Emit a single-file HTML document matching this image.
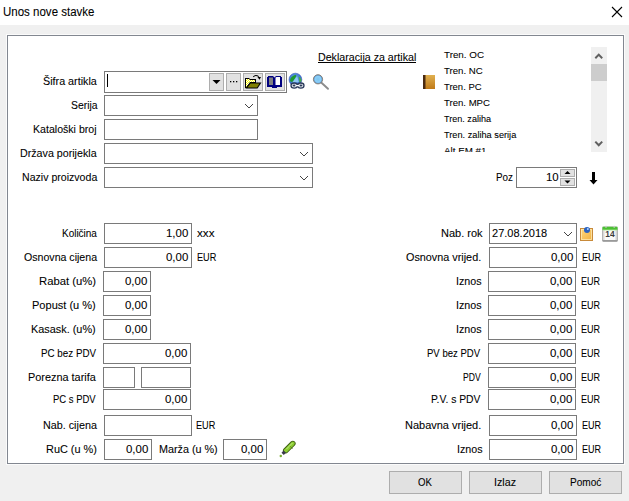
<!DOCTYPE html>
<html><head><meta charset="utf-8"><style>
html,body{margin:0;padding:0;width:629px;height:501px;overflow:hidden;background:#f0f0f0;position:relative;font-family:"Liberation Sans",sans-serif;}
.t{position:absolute;white-space:nowrap;line-height:1;transform-origin:0 0;-webkit-text-stroke:0.08px currentColor;}
.b{position:absolute;box-sizing:border-box;border:1px solid #7a7a7a;background:#fff;}
.btn{position:absolute;box-sizing:border-box;border:1px solid #adadad;background:#e1e1e1;}
svg{position:absolute;overflow:visible;}
</style></head><body>
<div style="position:absolute;left:0;top:0;width:629px;height:25px;background:#fff"></div>
<div style="position:absolute;left:6px;top:34px;width:619px;height:431px;background:#fbfbfb"></div>
<div style="position:absolute;left:7px;top:35px;width:617px;height:429px;box-sizing:border-box;border:1px solid #828790;background:#fff"></div>
<div class="t" style="left:2.50px;top:6.00px;font-size:12.5px;transform:scaleX(0.9209);color:#000;">Unos nove stavke</div>
<svg style="left:0;top:0" width="629" height="30"><path d="M612 7 L622 17 M622 7 L612 17" stroke="#000" stroke-width="1.1" fill="none"/></svg>
<div class="b" style="left:104px;top:71px;width:183px;height:22px;"></div>
<div class="btn" style="left:209px;top:73px;width:15px;height:18px;"></div>
<div class="btn" style="left:226px;top:73px;width:15px;height:18px;"></div>
<div class="btn" style="left:243px;top:73px;width:20px;height:18px;"></div>
<div class="btn" style="left:265px;top:73px;width:20px;height:18px;"></div>
<div class="b" style="left:104px;top:95px;width:154px;height:21px;"></div>
<div class="b" style="left:104px;top:119px;width:154px;height:21px;"></div>
<div class="b" style="left:104px;top:143px;width:209px;height:21px;"></div>
<div class="b" style="left:104px;top:167px;width:209px;height:21px;"></div>
<div class="b" style="left:516px;top:167px;width:61px;height:21px;"></div>
<div class="t" style="left:43.20px;top:75.74px;font-size:11px;transform:scaleX(0.9776);color:#000;">Šifra artikla</div>
<div class="t" style="left:70.50px;top:99.74px;font-size:11px;transform:scaleX(0.9422);color:#000;">Serija</div>
<div class="t" style="left:33.40px;top:123.74px;font-size:11px;transform:scaleX(0.9627);color:#000;">Kataloški broj</div>
<div class="t" style="left:20.40px;top:147.74px;font-size:11px;transform:scaleX(0.9712);color:#000;">Država porijekla</div>
<div class="t" style="left:21.70px;top:171.74px;font-size:11px;transform:scaleX(0.9619);color:#000;">Naziv proizvoda</div>
<div class="b" style="left:104px;top:223px;width:88px;height:21px;"></div>
<div class="b" style="left:104px;top:247px;width:88px;height:21px;"></div>
<div class="b" style="left:103px;top:271px;width:48px;height:21px;"></div>
<div class="b" style="left:103px;top:295px;width:48px;height:21px;"></div>
<div class="b" style="left:103px;top:319px;width:48px;height:21px;"></div>
<div class="b" style="left:103px;top:343px;width:88px;height:21px;"></div>
<div class="b" style="left:103px;top:367px;width:32px;height:21px;"></div>
<div class="b" style="left:141px;top:367px;width:50px;height:21px;"></div>
<div class="b" style="left:103px;top:389px;width:88px;height:21px;"></div>
<div class="b" style="left:104px;top:415px;width:88px;height:21px;"></div>
<div class="b" style="left:104px;top:439px;width:48px;height:21px;"></div>
<div class="b" style="left:223px;top:439px;width:44px;height:21px;"></div>
<div class="t" style="left:62.20px;top:227.74px;font-size:11px;transform:scaleX(0.9058);color:#000;">Količina</div>
<div class="t" style="left:23.90px;top:251.74px;font-size:11px;transform:scaleX(0.9634);color:#000;">Osnovna cijena</div>
<div class="t" style="left:39.00px;top:275.74px;font-size:11px;transform:scaleX(1.0241);color:#000;">Rabat (u%)</div>
<div class="t" style="left:32.20px;top:299.74px;font-size:11px;transform:scaleX(1.0028);color:#000;">Popust (u %)</div>
<div class="t" style="left:31.30px;top:323.74px;font-size:11px;transform:scaleX(0.9887);color:#000;">Kasask. (u%)</div>
<div class="t" style="left:40.80px;top:347.74px;font-size:11px;transform:scaleX(0.8919);color:#000;">PC bez PDV</div>
<div class="t" style="left:28.20px;top:371.74px;font-size:11px;transform:scaleX(0.9893);color:#000;">Porezna tarifa</div>
<div class="t" style="left:53.30px;top:393.74px;font-size:11px;transform:scaleX(0.8621);color:#000;">PC s PDV</div>
<div class="t" style="left:43.20px;top:419.74px;font-size:11px;transform:scaleX(0.9789);color:#000;">Nab. cijena</div>
<div class="t" style="left:46.10px;top:443.74px;font-size:11px;transform:scaleX(0.9914);color:#000;">RuC (u %)</div>
<div class="t" style="left:158.70px;top:443.74px;font-size:11px;transform:scaleX(0.9799);color:#000;">Marža (u %)</div>
<div class="b" style="left:489px;top:223px;width:88px;height:21px;"></div>
<div class="b" style="left:489px;top:247px;width:88px;height:21px;"></div>
<div class="b" style="left:488px;top:271px;width:88px;height:21px;"></div>
<div class="b" style="left:488px;top:295px;width:88px;height:21px;"></div>
<div class="b" style="left:488px;top:319px;width:88px;height:21px;"></div>
<div class="b" style="left:488px;top:343px;width:88px;height:21px;"></div>
<div class="b" style="left:488px;top:367px;width:88px;height:21px;"></div>
<div class="b" style="left:488px;top:389px;width:88px;height:21px;"></div>
<div class="b" style="left:489px;top:415px;width:88px;height:21px;"></div>
<div class="b" style="left:489px;top:439px;width:88px;height:21px;"></div>
<div class="t" style="left:441.20px;top:227.74px;font-size:11px;transform:scaleX(1.0002);color:#000;">Nab. rok</div>
<div class="t" style="left:405.80px;top:251.74px;font-size:11px;transform:scaleX(0.9834);color:#000;">Osnovna vrijed.</div>
<div class="t" style="left:455.50px;top:275.74px;font-size:11px;transform:scaleX(0.9729);color:#000;">Iznos</div>
<div class="t" style="left:455.50px;top:299.74px;font-size:11px;transform:scaleX(0.9729);color:#000;">Iznos</div>
<div class="t" style="left:455.50px;top:323.74px;font-size:11px;transform:scaleX(0.9729);color:#000;">Iznos</div>
<div class="t" style="left:427.30px;top:347.74px;font-size:11px;transform:scaleX(0.8678);color:#000;">PV bez PDV</div>
<div class="t" style="left:462.70px;top:371.74px;font-size:11px;transform:scaleX(0.7823);color:#000;">PDV</div>
<div class="t" style="left:430.90px;top:393.74px;font-size:11px;transform:scaleX(0.9406);color:#000;">P.V. s PDV</div>
<div class="t" style="left:405.30px;top:419.74px;font-size:11px;transform:scaleX(0.9978);color:#000;">Nabavna vrijed.</div>
<div class="t" style="left:456.70px;top:443.74px;font-size:11px;transform:scaleX(0.9729);color:#000;">Iznos</div>
<div class="t" style="left:495.50px;top:171.74px;font-size:11px;transform:scaleX(0.8962);color:#000;">Poz</div>
<div class="btn" style="left:389px;top:471px;width:73px;height:23px;"></div>
<div class="btn" style="left:469px;top:471px;width:73px;height:23px;"></div>
<div class="btn" style="left:549px;top:471px;width:73px;height:23px;"></div>
<div class="t" style="left:166.28px;top:227.74px;font-size:11px;transform:scaleX(1.0400)">1,00</div>
<div class="t" style="left:166.28px;top:251.74px;font-size:11px;transform:scaleX(1.0400)">0,00</div>
<div class="t" style="left:125.28px;top:275.74px;font-size:11px;transform:scaleX(1.0400)">0,00</div>
<div class="t" style="left:125.28px;top:299.74px;font-size:11px;transform:scaleX(1.0400)">0,00</div>
<div class="t" style="left:125.28px;top:323.74px;font-size:11px;transform:scaleX(1.0400)">0,00</div>
<div class="t" style="left:165.28px;top:347.74px;font-size:11px;transform:scaleX(1.0400)">0,00</div>
<div class="t" style="left:165.28px;top:393.74px;font-size:11px;transform:scaleX(1.0400)">0,00</div>
<div class="t" style="left:126.28px;top:443.74px;font-size:11px;transform:scaleX(1.0400)">0,00</div>
<div class="t" style="left:241.28px;top:443.74px;font-size:11px;transform:scaleX(1.0400)">0,00</div>
<div class="t" style="left:551.28px;top:251.74px;font-size:11px;transform:scaleX(1.0400)">0,00</div>
<div class="t" style="left:551.28px;top:419.74px;font-size:11px;transform:scaleX(1.0400)">0,00</div>
<div class="t" style="left:551.28px;top:443.74px;font-size:11px;transform:scaleX(1.0400)">0,00</div>
<div class="t" style="left:550.28px;top:275.74px;font-size:11px;transform:scaleX(1.0400)">0,00</div>
<div class="t" style="left:550.28px;top:299.74px;font-size:11px;transform:scaleX(1.0400)">0,00</div>
<div class="t" style="left:550.28px;top:323.74px;font-size:11px;transform:scaleX(1.0400)">0,00</div>
<div class="t" style="left:550.28px;top:347.74px;font-size:11px;transform:scaleX(1.0400)">0,00</div>
<div class="t" style="left:550.28px;top:371.74px;font-size:11px;transform:scaleX(1.0400)">0,00</div>
<div class="t" style="left:550.28px;top:393.74px;font-size:11px;transform:scaleX(1.0400)">0,00</div>
<div class="t" style="left:545.83px;top:171.74px;font-size:11px;transform:scaleX(1.0400)">10</div>
<div class="t" style="left:196.70px;top:227.74px;font-size:11px;transform:scaleX(1.0606);color:#000;">xxx</div>
<div class="t" style="left:196.70px;top:251.74px;font-size:11px;transform:scaleX(0.8312);color:#000;">EUR</div>
<div class="t" style="left:196.30px;top:419.74px;font-size:11px;transform:scaleX(0.8312);color:#000;">EUR</div>
<div class="t" style="left:582.00px;top:251.74px;font-size:11px;transform:scaleX(0.8183);color:#000;">EUR</div>
<div class="t" style="left:582.00px;top:419.74px;font-size:11px;transform:scaleX(0.8183);color:#000;">EUR</div>
<div class="t" style="left:582.00px;top:443.74px;font-size:11px;transform:scaleX(0.8183);color:#000;">EUR</div>
<div class="t" style="left:581.00px;top:275.74px;font-size:11px;transform:scaleX(0.8183);color:#000;">EUR</div>
<div class="t" style="left:581.00px;top:299.74px;font-size:11px;transform:scaleX(0.8183);color:#000;">EUR</div>
<div class="t" style="left:581.00px;top:323.74px;font-size:11px;transform:scaleX(0.8183);color:#000;">EUR</div>
<div class="t" style="left:581.00px;top:347.74px;font-size:11px;transform:scaleX(0.8183);color:#000;">EUR</div>
<div class="t" style="left:581.00px;top:371.74px;font-size:11px;transform:scaleX(0.8183);color:#000;">EUR</div>
<div class="t" style="left:581.00px;top:393.74px;font-size:11px;transform:scaleX(0.8183);color:#000;">EUR</div>
<div class="t" style="left:491.80px;top:227.74px;font-size:11px;transform:scaleX(1.0014);color:#000;">27.08.2018</div>
<svg style="left:0;top:0" width="1" height="1" fill="#444"><rect x="245" y="104" width="1" height="1"/><rect x="252" y="104" width="1" height="1"/><rect x="246" y="105" width="1" height="1"/><rect x="251" y="105" width="1" height="1"/><rect x="247" y="106" width="1" height="1"/><rect x="250" y="106" width="1" height="1"/><rect x="248" y="107" width="1" height="1"/><rect x="249" y="107" width="1" height="1"/></svg>
<svg style="left:0;top:0" width="1" height="1" fill="#444"><rect x="300" y="152" width="1" height="1"/><rect x="307" y="152" width="1" height="1"/><rect x="301" y="153" width="1" height="1"/><rect x="306" y="153" width="1" height="1"/><rect x="302" y="154" width="1" height="1"/><rect x="305" y="154" width="1" height="1"/><rect x="303" y="155" width="1" height="1"/><rect x="304" y="155" width="1" height="1"/></svg>
<svg style="left:0;top:0" width="1" height="1" fill="#444"><rect x="300" y="176" width="1" height="1"/><rect x="307" y="176" width="1" height="1"/><rect x="301" y="177" width="1" height="1"/><rect x="306" y="177" width="1" height="1"/><rect x="302" y="178" width="1" height="1"/><rect x="305" y="178" width="1" height="1"/><rect x="303" y="179" width="1" height="1"/><rect x="304" y="179" width="1" height="1"/></svg>
<svg style="left:0;top:0" width="1" height="1" fill="#444"><rect x="564" y="232" width="1" height="1"/><rect x="571" y="232" width="1" height="1"/><rect x="565" y="233" width="1" height="1"/><rect x="570" y="233" width="1" height="1"/><rect x="566" y="234" width="1" height="1"/><rect x="569" y="234" width="1" height="1"/><rect x="567" y="235" width="1" height="1"/><rect x="568" y="235" width="1" height="1"/></svg>
<div class="t" style="left:417.60px;top:476.74px;font-size:11px;transform:scaleX(0.8739);color:#000;">OK</div>
<div class="t" style="left:493.50px;top:476.74px;font-size:11px;transform:scaleX(0.9724);color:#000;">Izlaz</div>
<div class="t" style="left:569.50px;top:476.74px;font-size:11px;transform:scaleX(0.9168);color:#000;">Pomoć</div>
<div class="t" style="left:317.50px;top:52.14px;font-size:11px;transform:scaleX(0.9685);color:#000;">Deklaracija za artikal</div>
<div style="position:absolute;left:318px;top:62px;width:98px;height:1px;background:#000"></div>
<div style="position:absolute;left:440px;top:44px;width:150px;height:108px;overflow:hidden">
<div class="t" style="left:4.3px;top:6.05px;font-size:9.7px;transform:scaleX(1.0135);-webkit-text-stroke:0.08px #000">Tren. OC</div>
<div class="t" style="left:4.3px;top:22.05px;font-size:9.7px;transform:scaleX(0.9939);-webkit-text-stroke:0.08px #000">Tren. NC</div>
<div class="t" style="left:4.3px;top:38.05px;font-size:9.7px;transform:scaleX(0.9790);-webkit-text-stroke:0.08px #000">Tren. PC</div>
<div class="t" style="left:4.3px;top:54.05px;font-size:9.7px;transform:scaleX(0.9878);-webkit-text-stroke:0.08px #000">Tren. MPC</div>
<div class="t" style="left:4.3px;top:70.05px;font-size:9.7px;transform:scaleX(0.9370);-webkit-text-stroke:0.08px #000">Tren. zaliha</div>
<div class="t" style="left:4.3px;top:86.05px;font-size:9.7px;transform:scaleX(0.9499);-webkit-text-stroke:0.08px #000">Tren. zaliha serija</div>
<div class="t" style="left:4.3px;top:102.05px;font-size:9.7px;transform:scaleX(1.0119);-webkit-text-stroke:0.08px #000">Alt EM #1</div>
</div>
<div style="position:absolute;left:591px;top:47px;width:16px;height:105px;background:#f0f0f0"></div>
<div style="position:absolute;left:591px;top:64px;width:16px;height:17px;background:#cdcdcd"></div>
<svg style="left:0;top:0" width="1" height="1"><path d="M595.3 58.3 L598.75 54.6 L602.2 58.3" stroke="#606060" stroke-width="2" fill="none"/><path d="M595.3 141.6 L598.75 145.3 L602.2 141.6" stroke="#606060" stroke-width="2" fill="none"/></svg>
<svg style="left:0;top:0" width="1" height="1"><path d="M212.5 80 L220.5 80 L216.5 84 Z" fill="#000"/><rect x="230" y="81" width="1.3" height="1.3" fill="#000"/><rect x="233" y="81" width="1.3" height="1.3" fill="#000"/><rect x="236" y="81" width="1.3" height="1.3" fill="#000"/></svg>
<div style="position:absolute;left:107px;top:74px;width:1px;height:13px;background:#000"></div>
<div class="btn" style="left:560px;top:169px;width:15px;height:8px;"></div>
<div class="btn" style="left:560px;top:178px;width:15px;height:8px;"></div>
<svg style="left:0;top:0" width="1" height="1"><path d="M564.5 174 L570.5 174 L567.5 171 Z" fill="#000"/><path d="M564.5 180.5 L570.5 180.5 L567.5 183.5 Z" fill="#000"/><path d="M592 172 L595 172 L595 180 L597.5 180 L593.5 184.5 L589.5 180 L592 180 Z" fill="#000"/></svg>
<svg style="left:0;top:0" width="1" height="1">
<defs><pattern id="dith" x="0" y="0" width="2" height="2" patternUnits="userSpaceOnUse"><rect width="2" height="2" fill="#ffff00"/><rect x="1" y="0" width="1" height="1" fill="#fff"/><rect x="0" y="1" width="1" height="1" fill="#fff"/></pattern></defs>
<path d="M245 78 H249 L250 79 H256 V83 H250 L246 88 H245 Z" fill="#000"/>
<path d="M246 79 H249 L250 80 H255 V82 H250 L246.5 87 H246 Z" fill="url(#dith)"/>
<path d="M246 87.5 L250 82.5 H261.5 L257.5 88.5 H245.5 Z" fill="#000"/>
<path d="M247.5 87.5 L250.5 83.5 H259.5 L257 87.5 Z" fill="#808000"/>
<path d="M253.3 76.8 Q255.5 74.3 258.8 76.6" stroke="#000" stroke-width="1.1" fill="none"/>
<path d="M257.5 77 H261 L259.5 79.8 Z" fill="#000"/>
</svg>
<svg style="left:0;top:0" width="1" height="1">
<path d="M267 77 H268 V76 H273 L274.5 77.5 L276 76 H281 V77 H282 V87 H277 V88 H272 V87 H267 Z" fill="#000080"/>
<rect x="269" y="77.5" width="4" height="7.5" fill="#808080"/>
<path d="M275.5 77.5 L276.5 77 H280 V85 H275.5 Z" fill="#fff"/>
</svg>
<svg style="left:0;top:0" width="1" height="1">
<defs><radialGradient id="gl" cx="0.45" cy="0.4" r="0.65"><stop offset="0" stop-color="#70b0f0"/><stop offset="0.75" stop-color="#3a70d0"/><stop offset="1" stop-color="#2a50b0"/></radialGradient></defs>
<circle cx="295.4" cy="79.6" r="6.4" fill="url(#gl)" stroke="#3a5cb8" stroke-width="0.6"/>
<path d="M290 80.5 Q290.5 76.5 295.5 74.8 L296.5 76 L293 81.5 L291 82 Z" fill="#1f9a30"/>
<path d="M298.5 76.2 Q301.2 77.5 301.6 81 L299.5 82.5 Z" fill="#44b040"/>
<path d="M297 76.3 L292.5 82.3 L299 82.3 Z" fill="#8cc8f4"/>
<ellipse cx="294.2" cy="85.6" rx="3.2" ry="2.6" fill="#e6ebf0" stroke="#2c3c5c" stroke-width="1.3"/>
<ellipse cx="300.8" cy="85.6" rx="3.2" ry="2.6" fill="#e6ebf0" stroke="#2c3c5c" stroke-width="1.3"/>
<ellipse cx="294.2" cy="85.6" rx="1.6" ry="1" fill="#2c3c5c"/>
<ellipse cx="300.8" cy="85.6" rx="1.6" ry="1" fill="#2c3c5c"/>
<rect x="295.5" y="85" width="4" height="1.2" fill="#fff"/>
</svg>
<svg style="left:0;top:0" width="1" height="1">
<defs><radialGradient id="mg" cx="0.5" cy="0.5" r="0.55"><stop offset="0" stop-color="#7cc4f0"/><stop offset="0.6" stop-color="#8cd0f8"/><stop offset="1" stop-color="#2a66c0"/></radialGradient></defs>
<path d="M321.2 82.5 L328 88.8" stroke="#8c8c8c" stroke-width="1.9" stroke-linecap="round"/>
<circle cx="318" cy="79.3" r="4.6" fill="url(#mg)" stroke="#8a8478" stroke-width="1"/>
</svg>
<svg style="left:0;top:0" width="1" height="1">
<defs><linearGradient id="bk" x1="0" y1="0" x2="0" y2="1"><stop offset="0" stop-color="#e0b050"/><stop offset="1" stop-color="#c07a18"/></linearGradient></defs>
<rect x="423" y="75" width="12" height="14" fill="url(#bk)"/>
<rect x="423" y="75" width="2.5" height="14" fill="#4a2a10"/>
</svg>
<svg style="left:0;top:0" width="1" height="1">
<defs><linearGradient id="nt" x1="0" y1="0" x2="1" y2="1"><stop offset="0" stop-color="#ffd880"/><stop offset="1" stop-color="#f0b040"/></linearGradient></defs>
<rect x="580.5" y="228.5" width="12" height="12" fill="url(#nt)" stroke="#c88a3a" stroke-width="1"/>
<rect x="581.5" y="229.5" width="10" height="10" fill="none" stroke="#fff4c8" stroke-width="0.8" opacity="0.8"/><circle cx="587" cy="229.9" r="3" fill="#2a62c0"/><circle cx="587.8" cy="229" r="1" fill="#b0d4ff"/>
</svg>
<svg style="left:0;top:0" width="1" height="1">
<defs><linearGradient id="cb" x1="0" y1="0" x2="1" y2="0"><stop offset="0" stop-color="#c8c8c8"/><stop offset="0.2" stop-color="#fafafa"/><stop offset="0.8" stop-color="#fafafa"/><stop offset="1" stop-color="#c0c0c0"/></linearGradient></defs>
<rect x="602.5" y="227" width="15" height="14.5" rx="1.5" fill="url(#cb)" stroke="#a8a8a8" stroke-width="0.8"/>
<rect x="602.5" y="240" width="15" height="1.5" fill="#9a9a9a"/>
<rect x="602.5" y="226.7" width="15" height="3.3" fill="#4cc034"/>
<rect x="602.5" y="229.6" width="15" height="0.8" fill="#a8e890"/>
<circle cx="606" cy="226.8" r="1" fill="#c8c8c8"/><circle cx="614.2" cy="226.8" r="1" fill="#c8c8c8"/>
<text x="610" y="236.9" font-family="Liberation Sans" font-weight="bold" font-size="8.4" text-anchor="middle" fill="#3c3c3c">14</text>
</svg>
<svg style="left:0;top:0" width="1" height="1">
<path d="M285.8 450.6 L292.8 443.6" stroke="#3a5a10" stroke-width="5.6" stroke-linecap="round"/>
<path d="M285.8 450.6 L292.8 443.6" stroke="#8ccc30" stroke-width="3.8" stroke-linecap="round"/>
<path d="M286.5 449 L292.3 443.2" stroke="#c4ee88" stroke-width="1" stroke-linecap="round"/>
<path d="M290 446.2 L292.6 448.8" stroke="#4a7010" stroke-width="0.7"/>
<path d="M281.5 452.8 L283.6 450.4 L286 452.8 L283.8 455 Z" fill="#3a3a4a"/>
<circle cx="280.8" cy="456" r="1.2" fill="#7ab030"/>
</svg>
</body></html>
